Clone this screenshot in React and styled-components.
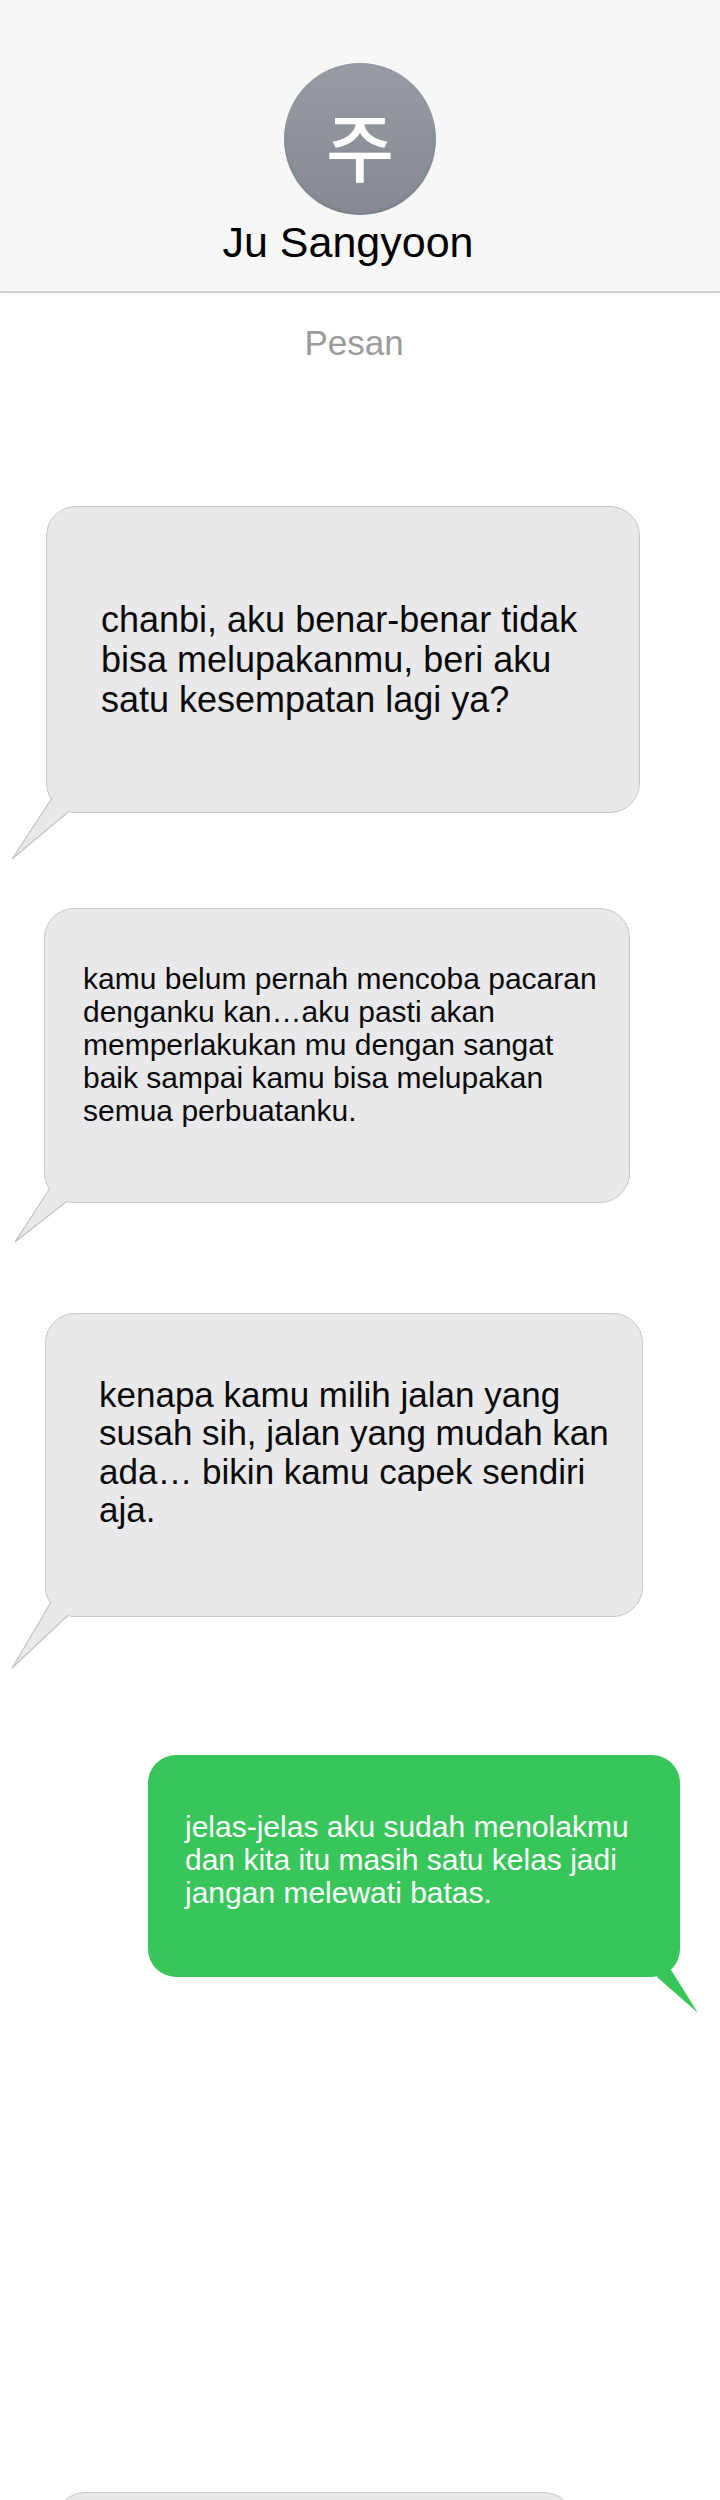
import React from "react";
import styled, { createGlobalStyle } from "styled-components";

const Global = createGlobalStyle`
  html, body { margin: 0; padding: 0; background: #ffffff; }
  body { font-family: "Liberation Sans", Arial, sans-serif; }
`;

const Page = styled.div`
  width: 720px;
  height: 2500px;
  overflow: hidden;
  background: #ffffff;
  display: flex;
  flex-direction: column;
`;

const Header = styled.header`
  background: #f7f7f7;
  border-bottom: 2px solid #d3d3d3;
  box-shadow: 0 1px 3px rgba(0, 0, 0, 0.06);
  padding: 63px 0 24px;
  display: flex;
  flex-direction: column;
  align-items: center;
`;

const Avatar = styled.div`
  width: 152px;
  height: 152px;
  border-radius: 50%;
  background: linear-gradient(180deg, #979ba4 0%, #8c9099 60%, #858992 100%);
  box-shadow: inset 0 -2px 3px rgba(0, 0, 0, 0.08);
  display: flex;
  align-items: center;
  justify-content: center;
`;

const Initial = styled.span`
  font-family: "Noto Sans CJK KR", "Noto Sans CJK SC", sans-serif;
  font-size: 74px;
  font-weight: 500;
  color: #ffffff;
  line-height: 1;
  padding-top: 10px;
`;

const Name = styled.h1`
  margin: 3px 24px 0 0;
  font-family: "Liberation Sans", Arial, sans-serif;
  font-weight: 400;
  font-size: 43px;
  line-height: 49px;
  color: #000000;
`;

const Label = styled.div`
  margin: 30px 12px 0 0;
  text-align: center;
  font-size: 35px;
  line-height: 40px;
  color: #9b9b9b;
`;

const Bubble = styled.div`
  position: relative;
  box-sizing: border-box;
  flex: none;
  margin-top: ${(p) => p.$gap}px;
  margin-left: ${(p) => p.$left}px;
  width: ${(p) => p.$width}px;
  height: ${(p) => p.$height}px;
  padding: ${(p) => p.$pt}px 20px 0 ${(p) => p.$pl}px;
  border-radius: ${(p) => (p.$out ? 28 : 30)}px;
  background: ${(p) => (p.$out ? "#38c65b" : "#e9e9eb")};
  border: ${(p) => (p.$out ? "none" : "1.5px solid #c6c6c8")};
  color: ${(p) => (p.$out ? "#ffffff" : "#0a0a0a")};
`;

const Text = styled.p`
  margin: 0;
  font-family: "Liberation Sans", Arial, sans-serif;
  font-size: ${(p) => p.$size}px;
  line-height: ${(p) => p.$lh}px;
  white-space: nowrap;
`;

const TailSvg = styled.svg`
  position: absolute;
  width: 100px;
  height: 100px;
  bottom: -70px;
  ${(p) => (p.$out ? "right: -50px;" : "left: -50px;")}
  overflow: visible;
  pointer-events: none;
`;

function InTail({ tipX, tipY }) {
  const tx = 50 + tipX;
  const ty = 30 + tipY;
  return (
    <TailSvg viewBox="0 0 100 100">
      <polygon
        points={`55.4,15.5 ${tx},${ty} 72,29 72,18 62,12`}
        fill="#e9e9eb"
      />
      <polyline
        points={`55.4,15.5 ${tx},${ty} 72,29.2`}
        fill="none"
        stroke="#c4c4c6"
        strokeWidth="1.2"
        strokeLinejoin="miter"
      />
    </TailSvg>
  );
}

function OutTail() {
  return (
    <TailSvg viewBox="0 0 100 100" $out>
      <polygon points="40.5,22 68,66 27,30 30,18" fill="#38c65b" />
    </TailSvg>
  );
}

const Lines = ({ lines }) =>
  lines.map((l, i) => (
    <React.Fragment key={i}>
      {l}
      {i < lines.length - 1 && <br />}
    </React.Fragment>
  ));

export default function App() {
  return (
    <>
      <Global />
      <Page>
        <Header>
          <Avatar>
            <Initial>주</Initial>
          </Avatar>
          <Name>Ju Sangyoon</Name>
        </Header>
        <Label>Pesan</Label>

        <Bubble $gap={143} $left={46} $width={594} $height={307} $pt={93} $pl={54}>
          <Text $size={36} $lh={40}>
            <Lines
              lines={[
                "chanbi, aku benar-benar tidak",
                "bisa melupakanmu, beri aku",
                "satu kesempatan lagi ya?",
              ]}
            />
          </Text>
          <InTail tipX={-35} tipY={47} />
        </Bubble>

        <Bubble $gap={95} $left={44} $width={586} $height={295} $pt={53} $pl={38}>
          <Text $size={30} $lh={33}>
            <Lines
              lines={[
                "kamu belum pernah mencoba pacaran",
                "denganku kan…aku pasti akan",
                "memperlakukan mu dengan sangat",
                "baik sampai kamu bisa melupakan",
                "semua perbuatanku.",
              ]}
            />
          </Text>
          <InTail tipX={-30} tipY={40} />
        </Bubble>

        <Bubble $gap={110} $left={45} $width={598} $height={304} $pt={62} $pl={53}>
          <Text $size={35} $lh={38.3}>
            <Lines
              lines={[
                "kenapa kamu milih jalan yang",
                "susah sih, jalan yang mudah kan",
                "ada… bikin kamu capek sendiri",
                "aja.",
              ]}
            />
          </Text>
          <InTail tipX={-34} tipY={52} />
        </Bubble>

        <Bubble $out $gap={138} $left={148} $width={532} $height={222} $pt={55} $pl={37}>
          <Text $size={30} $lh={33}>
            <Lines
              lines={[
                "jelas-jelas aku sudah menolakmu",
                "dan kita itu masih satu kelas jadi",
                "jangan melewati batas.",
              ]}
            />
          </Text>
          <OutTail />
        </Bubble>

        <Bubble $gap={515} $left={55} $width={519} $height={200} $pt={40} $pl={40} />
      </Page>
    </>
  );
}
